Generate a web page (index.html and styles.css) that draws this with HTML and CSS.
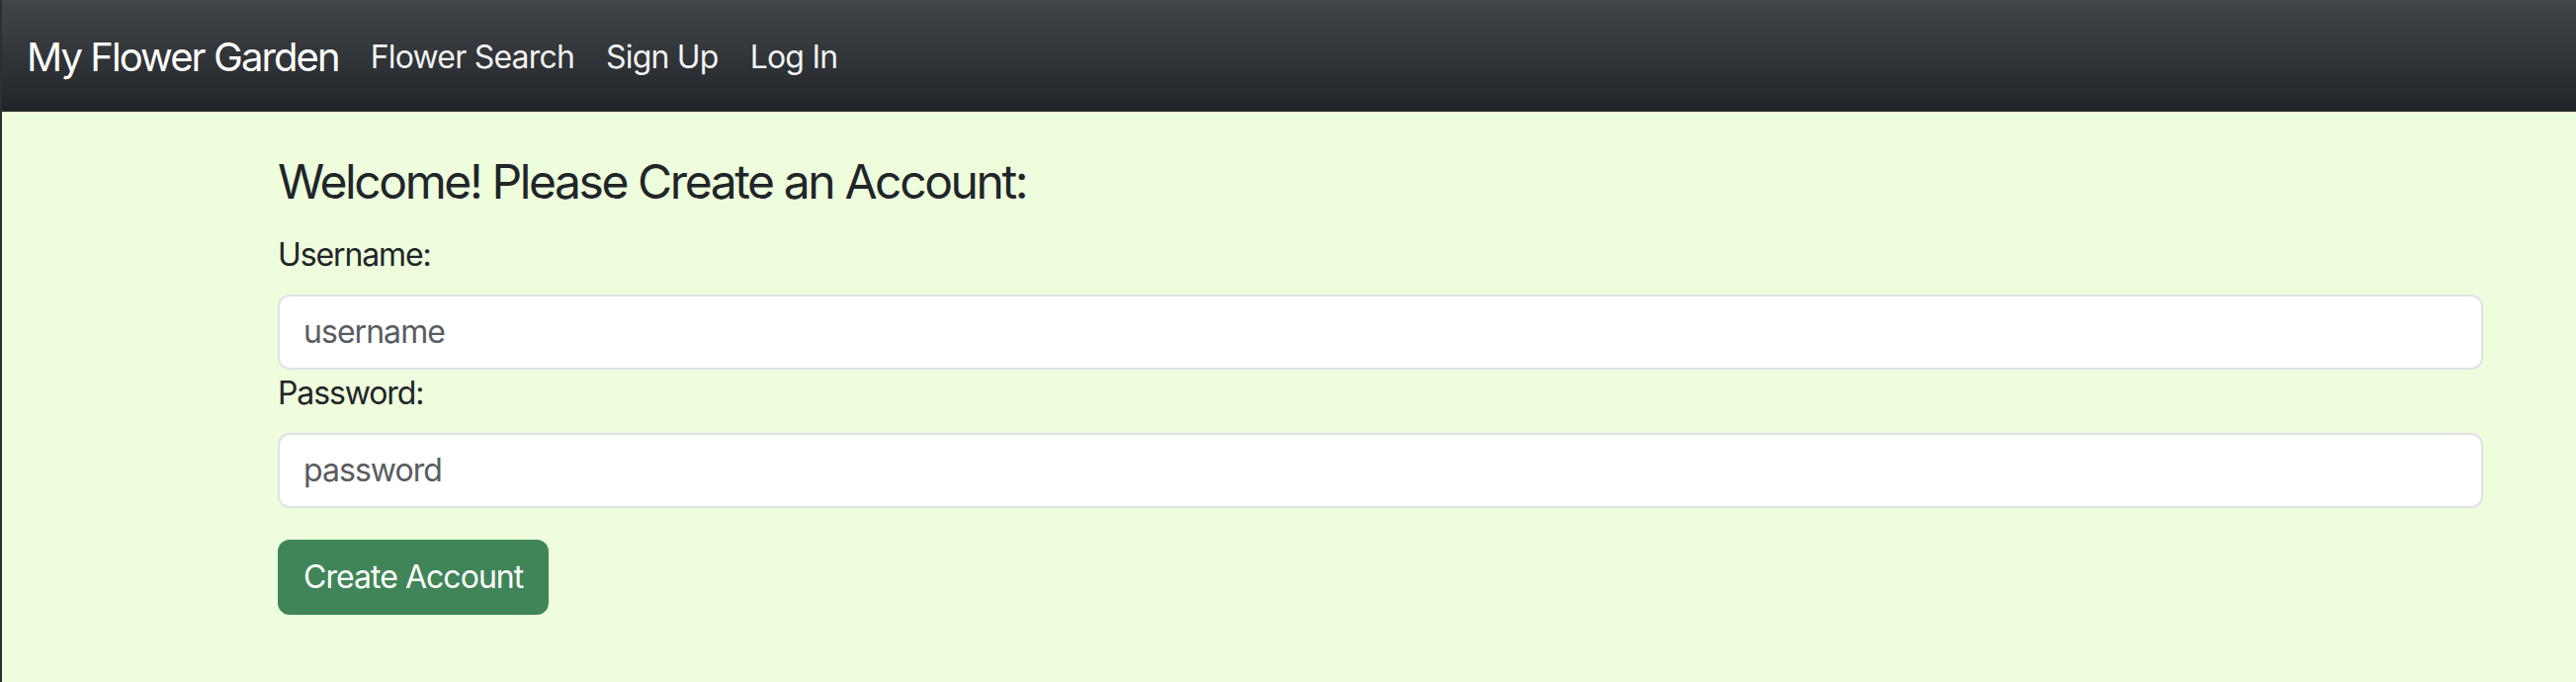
FILE: index.html
```html
<!DOCTYPE html>
<html lang="en">
<head>
<meta charset="utf-8">
<title>My Flower Garden</title>
<link rel="stylesheet" href="styles.css">
</head>
<body>
<nav class="navbar">
  <a class="brand" href="#">My Flower Garden</a>
  <ul class="nav">
    <li><a class="nav-link" href="#">Flower Search</a></li>
    <li><a class="nav-link" href="#">Sign Up</a></li>
    <li><a class="nav-link" href="#">Log In</a></li>
  </ul>
</nav>
<main class="page">
  <h4 class="title">Welcome! Please Create an Account:</h4>
  <form class="signup">
    <label class="field-label" for="username">Username:</label>
    <input class="field" id="username" type="text" placeholder="username">
    <label class="field-label" for="password">Password:</label>
    <input class="field" id="password" type="password" placeholder="password">
    <button class="btn-create" type="button">Create Account</button>
  </form>
</main>
</body>
</html>
```

FILE: styles.css
```css
html, body {
  margin: 0;
  padding: 0;
}
body {
  min-height: 690px;
  box-sizing: border-box;
  background: #eefddc;
  border-left: 2px solid #2e2f31;
  font-family: Inter, "Liberation Sans", sans-serif;
  color: #212529;
  letter-spacing: -0.03em;
}
.navbar {
  height: 113px;
  box-sizing: border-box;
  display: flex;
  align-items: center;
  padding: 3px 25px 0;
  background-color: #212529;
  background-image: linear-gradient(180deg, rgba(255,255,255,0.15), rgba(255,255,255,0));
}
.brand {
  font-size: 40px;
  line-height: 60px;
  letter-spacing: -0.048em;
  color: #fff;
  text-decoration: none;
  margin-right: 16px;
}
.nav {
  display: flex;
  list-style: none;
  margin: 0;
  padding: 0;
}
.nav-link {
  display: block;
  font-size: 32px;
  line-height: 48px;
  letter-spacing: -0.025em;
  padding: 0 16px;
  color: rgba(255,255,255,0.94);
  text-decoration: none;
}
.page {
  padding: 42px 94px 40px 279px;
}
.title {
  margin: 0 0 21px;
  font-size: 48px;
  line-height: 1.2;
  font-weight: 400;
  letter-spacing: -0.05em;
}
.signup {
  display: flex;
  flex-direction: column;
  align-items: flex-start;
}
.field-label {
  display: block;
  font-size: 32px;
  line-height: 48px;
  margin-bottom: 16px;
  letter-spacing: -0.035em;
}
.field {
  display: block;
  width: 100%;
  box-sizing: border-box;
  padding: 12px 24px;
  border: 2px solid #dee2e6;
  border-radius: 12px;
  background: #fff;
  font-family: inherit;
  font-size: 32px;
  line-height: 48px;
  letter-spacing: -0.03em;
  color: #212529;
  outline: none;
}
.field::placeholder {
  color: #595c5f;
}
.btn-create {
  margin-top: 32px;
  padding: 12px 24px;
  border: 2px solid #408558;
  border-radius: 12px;
  background: #408558;
  color: #fff;
  font-family: inherit;
  font-size: 32px;
  line-height: 48px;
  letter-spacing: -0.03em;
  cursor: pointer;
}
```
